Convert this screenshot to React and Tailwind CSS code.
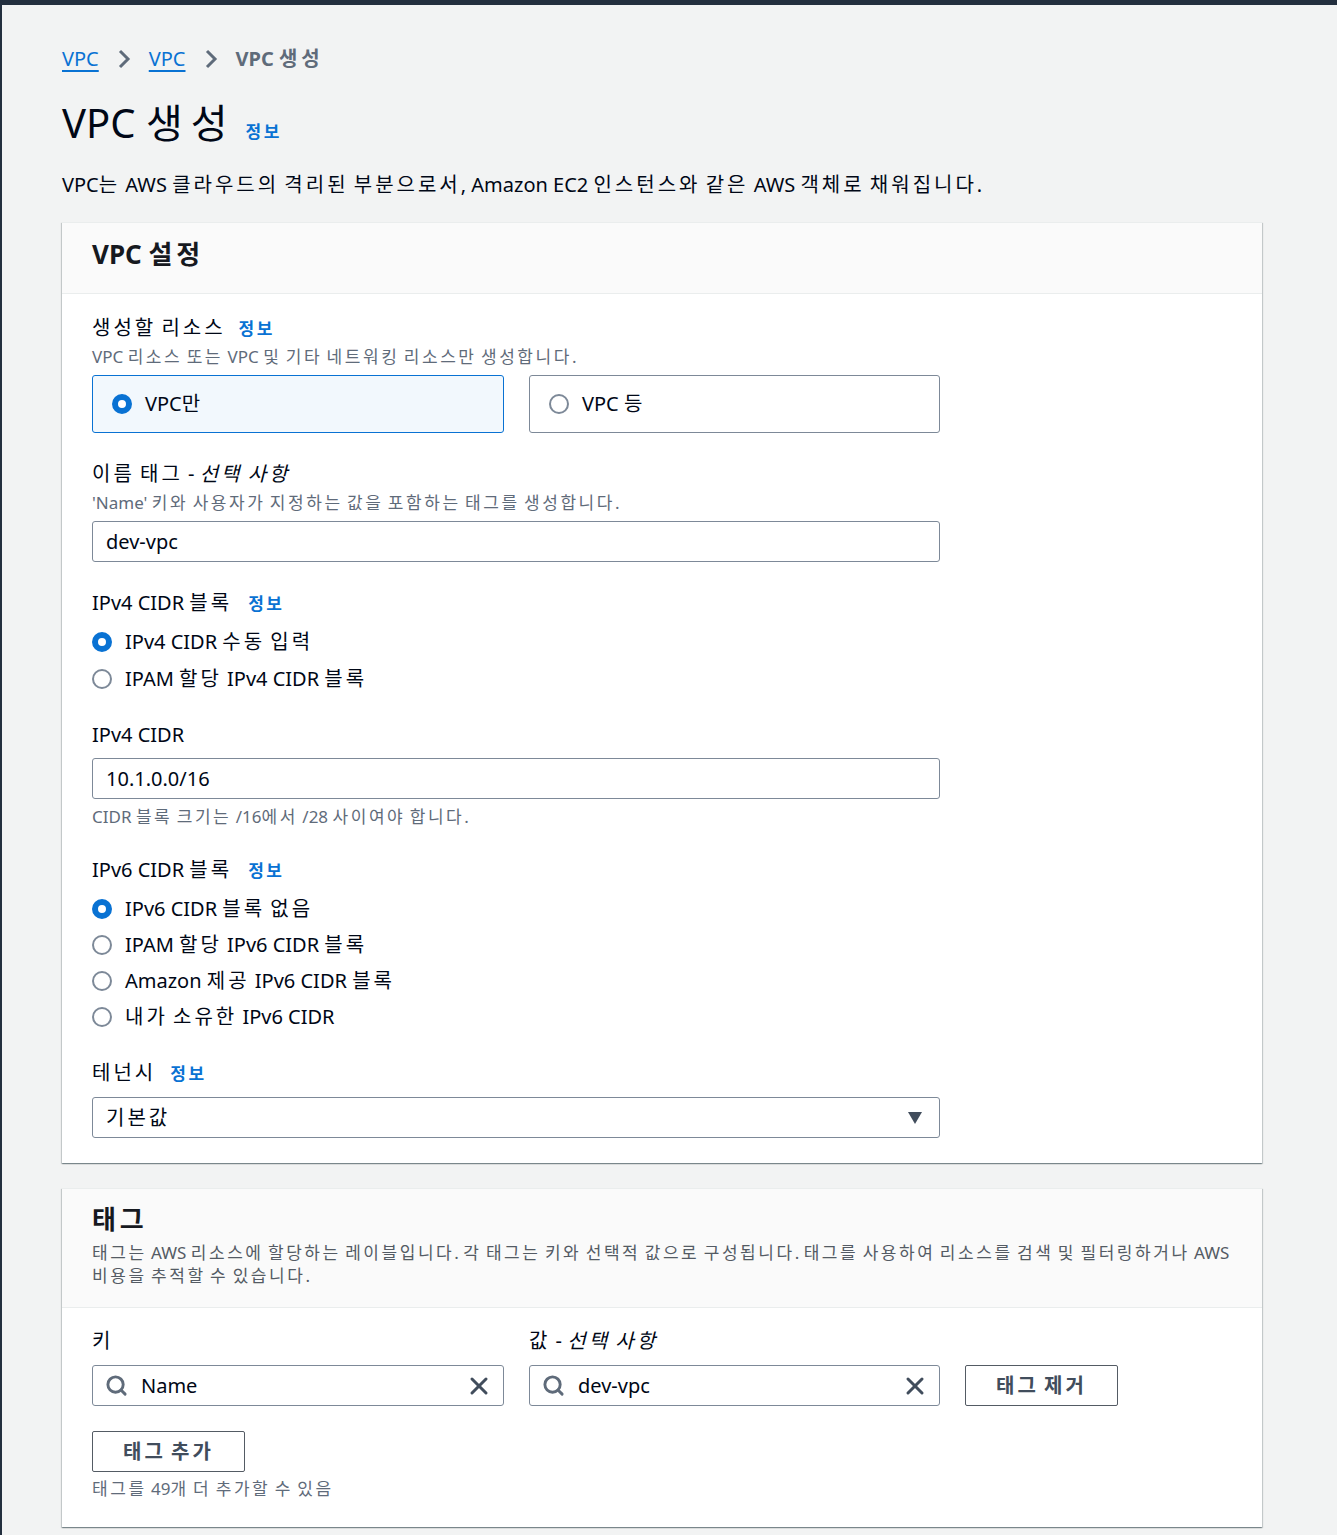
import { Search, X } from 'lucide-react'

const font = { fontFamily: '"Noto Sans", "Noto Sans CJK KR", sans-serif' }

// Hangul in the screenshot sits wider than Noto CJK, so widen those runs only
function k(text, track = 'tracking-[0.15em]') {
  return text.split(/([\uAC00-\uD7A3]+)/).map((part, i) =>
    /[\uAC00-\uD7A3]/.test(part) ? (
      <span key={i} className={track}>{part}</span>
    ) : (
      part
    )
  )
}

function Info({ className = '' }) {
  return <span className={`text-[17px] font-bold text-[#0972d3] ${className}`}>{k('정보')}</span>
}

function Radio({ checked }) {
  return checked ? (
    <span className="w-[20px] h-[20px] rounded-full border-[6px] border-[#0972d3] bg-white shrink-0" />
  ) : (
    <span className="w-[20px] h-[20px] rounded-full border-2 border-[#7d8998] bg-white shrink-0" />
  )
}

function RadioRow({ checked, label, h = 'h-[36px]' }) {
  return (
    <div className={`flex items-center gap-[13px] ${h}`}>
      <Radio checked={checked} />
      <span className="text-[20px] text-[#000716]">{k(label)}</span>
    </div>
  )
}

function TextInput({ value }) {
  return (
    <div className="h-[41px] w-[848px] border border-[#7d8998] rounded-[3px] bg-white flex items-center px-[13px] text-[20px] text-[#000716]">
      {value}
    </div>
  )
}

function Label({ children, className = '' }) {
  return <div className={`h-[28px] leading-[28px] text-[20px] text-[#000716] whitespace-nowrap ${className}`}>{children}</div>
}

function Desc({ children, className = '' }) {
  return <div className={`leading-[22px] text-[17px] text-[#5f6b7a] ${className}`}>{k(children)}</div>
}

function Chevron() {
  return (
    <svg width="16" height="24" viewBox="0 0 16 24" className="mx-[17px]">
      <path d="M4 4 L12 12 L4 20" fill="none" stroke="#5f6b7a" strokeWidth="3" />
    </svg>
  )
}

function SearchInput({ value, width }) {
  return (
    <div className={`h-[41px] ${width} border border-[#7d8998] rounded-[3px] bg-white flex items-center pl-[12px] pr-[10px]`}>
      <Search size={23} strokeWidth={3} className="text-[#5f6b7a]" />
      <span className="ml-[13px] flex-1 text-[20px] text-[#000716]">{value}</span>
      <X size={28} strokeWidth={2.6} className="text-[#414d5c]" />
    </div>
  )
}

function Button({ children }) {
  return (
    <div className="h-[41px] w-[153px] border border-[#545b64] rounded-[2px] bg-white flex items-center justify-center text-[20px] font-bold text-[#414d5c]">
      <span>{k(children)}</span>
    </div>
  )
}

const panel =
  'w-[1200px] bg-white border-t border-[#eaeded] shadow-[0_1px_1px_0_rgba(0,28,36,0.3),1px_1px_1px_0_rgba(0,28,36,0.15),-1px_1px_1px_0_rgba(0,28,36,0.15)]'

export default function App() {
  return (
    <div style={font} className="min-h-[1535px] bg-[#f2f3f3] relative">
      <div className="h-[5px] bg-[#232f3e]" />
      <div className="absolute left-0 top-0 bottom-0 w-[2px] bg-[#232f3e]" />
      <div className="pl-[62px] pt-[40px]">
        {/* Breadcrumb */}
        <div className="flex items-center h-[28px] text-[20px]">
          <span className="text-[#0972d3] underline underline-offset-[4px]">VPC</span>
          <Chevron />
          <span className="text-[#0972d3] underline underline-offset-[4px]">VPC</span>
          <Chevron />
          <span className="text-[#5f6b7a] font-bold">{k('VPC 생성', 'tracking-[0.2em]')}</span>
        </div>

        <div className="mt-[24px] flex items-end h-[52px]">
          <h1 className="text-[40px] leading-[52px] text-[#000716]">{k('VPC 생성', 'tracking-[0.2em]')}</h1>
          <Info className="ml-[10px] mb-[5px]" />
        </div>

        <p className="mt-[22px] text-[20px] leading-[28px] text-[#000716]">
          {k('VPC는 AWS 클라우드의 격리된 부분으로서, Amazon EC2 인스턴스와 같은 AWS 객체로 채워집니다.')}
        </p>

        {/* VPC settings */}
        <div className={`mt-[23px] ${panel}`}>
          <div className="bg-[#fafafa] border-b border-[#eaeded] px-[30px] pt-[14px] pb-[22px]">
            <h2 className="text-[26px] leading-[34px] font-bold text-[#16191f]">{k('VPC 설정')}</h2>
          </div>
          <div className="px-[30px] pt-[20px] pb-[25px]">
            <Label>
              {k('생성할 리소스')}
              <Info className="ml-[13px]" />
            </Label>
            <Desc className="mt-[4px]">VPC 리소스 또는 VPC 및 기타 네트워킹 리소스만 생성합니다.</Desc>
            <div className="mt-[7px] flex gap-[25px]">
              <div className="w-[412px] h-[58px] rounded-[3px] border border-[#0972d3] bg-[#f2f8fd] flex items-center pl-[19px] gap-[13px]">
                <Radio checked />
                <span className="text-[20px] text-[#000716]">{k('VPC만')}</span>
              </div>
              <div className="w-[411px] h-[58px] rounded-[3px] border border-[#7d8998] bg-white flex items-center pl-[19px] gap-[13px]">
                <Radio />
                <span className="text-[20px] text-[#000716]">{k('VPC 등')}</span>
              </div>
            </div>

            <Label className="mt-[27px]">
              {k('이름 태그 - ')}
              <i>{k('선택 사항')}</i>
            </Label>
            <Desc className="mt-[4px]">'Name' 키와 사용자가 지정하는 값을 포함하는 태그를 생성합니다.</Desc>
            <div className="mt-[7px]">
              <TextInput value="dev-vpc" />
            </div>

            <Label className="mt-[27px]">
              {k('IPv4 CIDR 블록')}
              <Info className="ml-[16px]" />
            </Label>
            <div className="mt-[6px]">
              <RadioRow checked label="IPv4 CIDR 수동 입력" h="h-[37px]" />
              <RadioRow label="IPAM 할당 IPv4 CIDR 블록" h="h-[37px]" />
            </div>

            <Label className="mt-[24px]">IPv4 CIDR</Label>
            <div className="mt-[9px]">
              <TextInput value="10.1.0.0/16" />
            </div>
            <Desc className="mt-[7px]">CIDR 블록 크기는 /16에서 /28 사이여야 합니다.</Desc>

            <Label className="mt-[28px]">
              {k('IPv6 CIDR 블록')}
              <Info className="ml-[16px]" />
            </Label>
            <div className="mt-[7px]">
              <RadioRow checked label="IPv6 CIDR 블록 없음" />
              <RadioRow label="IPAM 할당 IPv6 CIDR 블록" />
              <RadioRow label="Amazon 제공 IPv6 CIDR 블록" />
              <RadioRow label="내가 소유한 IPv6 CIDR" />
            </div>

            <Label className="mt-[24px]">
              {k('테넌시')}
              <Info className="ml-[14px]" />
            </Label>
            <div className="mt-[10px] h-[41px] w-[848px] border border-[#7d8998] rounded-[3px] bg-white flex items-center justify-between pl-[13px] pr-[16px] text-[20px] text-[#000716]">
              <span>{k('기본값')}</span>
              <svg width="16" height="14" viewBox="0 0 16 14">
                <path d="M1 1 H15 L8 13 Z" fill="#414d5c" />
              </svg>
            </div>
          </div>
        </div>

        {/* Tags */}
        <div className={`mt-[25px] ${panel}`}>
          <div className="bg-[#fafafa] border-b border-[#eaeded] px-[30px] pt-[13px] pb-[20px]">
            <h2 className="text-[26px] leading-[34px] font-bold text-[#16191f]">{k('태그')}</h2>
            <p className="mt-[5px] text-[17px] leading-[23px] text-[#545b64]">
              {k('태그는 AWS 리소스에 할당하는 레이블입니다. 각 태그는 키와 선택적 값으로 구성됩니다. 태그를 사용하여 리소스를 검색 및 필터링하거나 AWS 비용을 추적할 수 있습니다.')}
            </p>
          </div>
          <div className="px-[30px] pt-[19px] pb-[27px]">
            <div className="flex gap-[25px]">
              <div className="w-[412px]">
                <Label>{k('키')}</Label>
              </div>
              <div className="w-[411px]">
                <Label>
                  {k('값 - ')}
                  <i>{k('선택 사항')}</i>
                </Label>
              </div>
            </div>
            <div className="mt-[10px] flex gap-[25px] items-start">
              <SearchInput value="Name" width="w-[412px]" />
              <SearchInput value="dev-vpc" width="w-[411px]" />
              <Button>태그 제거</Button>
            </div>
            <div className="mt-[25px]">
              <Button>태그 추가</Button>
            </div>
            <Desc className="mt-[6px]">태그를 49개 더 추가할 수 있음</Desc>
          </div>
        </div>
      </div>
    </div>
  )
}
